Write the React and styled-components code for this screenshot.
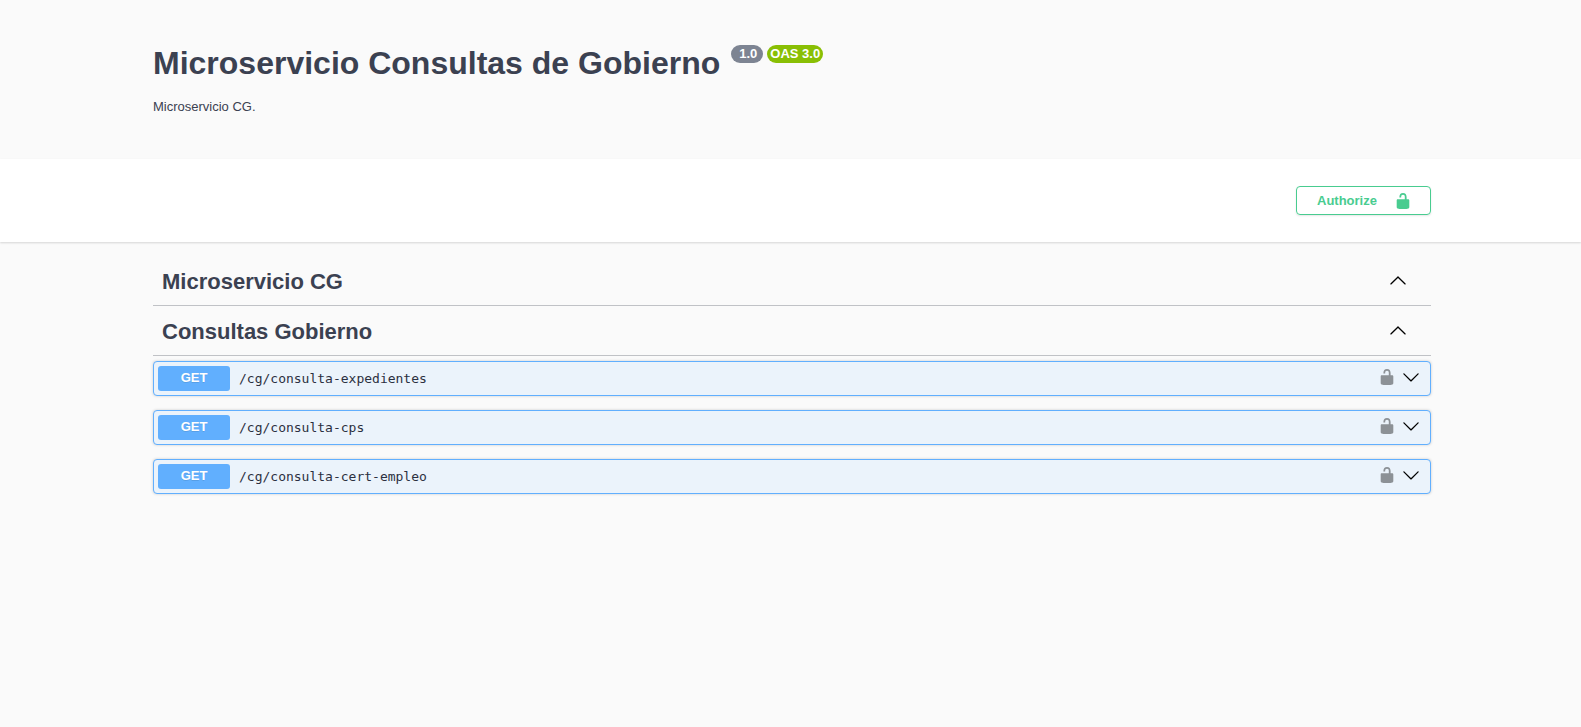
import React from "react";
import styled, { createGlobalStyle } from "styled-components";

const GlobalStyle = createGlobalStyle`
  * { box-sizing: border-box; }
  body {
    margin: 0;
    background: #fafafa;
    color: #3b4151;
    font-family: "Liberation Sans", Arial, sans-serif;
  }
  button { font-family: inherit; color: inherit; cursor: pointer; }
`;

const Wrapper = styled.div`
  padding: 0 150px 0 153px;
`;

const Info = styled.header`
  padding: 44px 0 43px;
`;

const TitleRow = styled.div`
  display: flex;
  align-items: flex-start;
  gap: 11px;
`;

const Title = styled.h1`
  margin: 0;
  font-size: 32px;
  line-height: 38px;
  font-weight: 700;
`;

const Badges = styled.div`
  display: flex;
  gap: 4px;
  padding-top: 1px;
`;

const Badge = styled.span`
  height: 18px;
  padding: ${(p) => (p.$wide ? "0 6px 0 8px" : "0 3px")};
  border-radius: 9px;
  background: ${(p) => p.$color};
  color: #fff;
  font-size: 13px;
  line-height: 17px;
  font-weight: 700;
`;

const Description = styled.p`
  margin: 16px 0 0;
  font-size: 13px;
  line-height: 18px;
`;

const SchemeBar = styled.section`
  background: #fff;
  padding: 27px 0;
  box-shadow: 0 1px 2px rgba(0, 0, 0, 0.15);
`;

const SchemeInner = styled(Wrapper)`
  display: flex;
  justify-content: flex-end;
`;

const AuthorizeButton = styled.button`
  display: flex;
  align-items: center;
  justify-content: space-between;
  width: 135px;
  height: 29px;
  padding: 0 18px 0 20px;
  border: 1px solid #49cc90;
  border-radius: 4px;
  background: transparent;
  box-shadow: 0 1px 2px rgba(0, 0, 0, 0.1);
  color: #49cc90;
  font-size: 13px;
  font-weight: 700;
`;

const Icon = styled.svg`
  display: block;
  flex: none;
  width: 18px;
  height: 18px;
  fill: currentColor;
`;

const Sections = styled.main`
  padding-top: 14px;
`;

const TagHeading = styled.h2`
  display: flex;
  align-items: flex-start;
  height: 50px;
  margin: 0;
  padding: 13px 24px 0 9px;
  border-bottom: 1px solid rgba(59, 65, 81, 0.3);
  font-size: 22px;
  line-height: 26px;
`;

const TagName = styled.span`
  flex: 1;
`;

const IconButton = styled.button`
  padding: ${(p) => (p.$tag ? "2px 0 0" : 0)};
  border: 0;
  background: none;
  color: #000;
  opacity: ${(p) => p.$opacity || 1};
`;

const Operations = styled.div`
  display: flex;
  flex-direction: column;
  gap: 14px;
  padding: 5px 0 40px;
`;

const Operation = styled.div`
  display: flex;
  align-items: center;
  padding: 4px 10px 4px 4px;
  border: 1px solid #61affe;
  border-radius: 4px;
  background: #ebf3fb;
  box-shadow: 0 0 3px rgba(0, 0, 0, 0.19);
`;

const OperationLink = styled.a`
  display: flex;
  flex: 1;
  align-items: center;
  gap: 9px;
  color: inherit;
  text-decoration: none;
`;

const Method = styled.span`
  width: 72px;
  height: 25px;
  border-radius: 3px;
  background: #61affe;
  color: #fff;
  font-size: 13px;
  line-height: 23px;
  font-weight: 700;
  text-align: center;
  text-shadow: 0 1px 0 rgba(0, 0, 0, 0.1);
`;

const Path = styled.span`
  font-family: "DejaVu Sans Mono", monospace;
  font-size: 13px;
  line-height: 25px;
  color: #2b3040;
`;

const Controls = styled.div`
  display: flex;
  gap: 6px;
  padding-bottom: 4px;
`;

const UnlockedIcon = () => (
  <Icon viewBox="0 0 20 20" aria-hidden="true">
    <path d="M15.8 8H14V5.6C14 2.703 12.665 1 10 1 7.334 1 6 2.703 6 5.6V6h2v-.801C8 3.754 8.797 3 10 3c1.203 0 2 .754 2 2.199V8H4c-.553 0-1 .646-1 1.199V17c0 .549.428 1.139.951 1.307l1.197.387C5.672 18.861 6.55 19 7.1 19h5.8c.549 0 1.428-.139 1.951-.307l1.196-.387c.524-.167.953-.757.953-1.306V9.199C17 8.646 16.352 8 15.8 8z" />
  </Icon>
);

const ArrowUp = () => (
  <Icon viewBox="0 0 20 20" aria-hidden="true">
    <path d="M17.418 14.908c.272.268.709.268.979 0s.271-.701 0-.969l-7.908-7.83c-.27-.268-.707-.268-.979 0l-7.908 7.83c-.27.268-.27.701 0 .969.271.268.709.268.979 0L10 7.767l7.418 7.141z" />
  </Icon>
);

const ArrowDown = () => (
  <Icon viewBox="0 0 20 20" aria-hidden="true">
    <path d="M17.418 6.109c.272-.268.709-.268.979 0s.271.701 0 .969l-7.908 7.83c-.27.268-.707.268-.979 0l-7.908-7.83c-.27-.268-.27-.701 0-.969.271-.268.709-.268.979 0L10 13.25l7.418-7.141z" />
  </Icon>
);

const tags = [
  { name: "Microservicio CG", paths: [] },
  {
    name: "Consultas Gobierno",
    paths: [
      "/cg/consulta-expedientes",
      "/cg/consulta-cps",
      "/cg/consulta-cert-empleo",
    ],
  },
];

export default function App() {
  return (
    <>
      <GlobalStyle />
      <Wrapper>
        <Info>
          <TitleRow>
            <Title>Microservicio Consultas de Gobierno</Title>
            <Badges>
              <Badge $color="#7d8492" $wide>1.0</Badge>
              <Badge $color="#89bf04">OAS 3.0</Badge>
            </Badges>
          </TitleRow>
          <Description>Microservicio CG.</Description>
        </Info>
      </Wrapper>
      <SchemeBar>
        <SchemeInner>
          <AuthorizeButton type="button">
            Authorize
            <UnlockedIcon />
          </AuthorizeButton>
        </SchemeInner>
      </SchemeBar>
      <Wrapper>
        <Sections>
          {tags.map((tag) => (
            <section key={tag.name}>
              <TagHeading>
                <TagName>{tag.name}</TagName>
                <IconButton type="button" $tag aria-label={`Collapse ${tag.name}`}>
                  <ArrowUp />
                </IconButton>
              </TagHeading>
              {tag.paths.length > 0 && (
                <Operations>
                  {tag.paths.map((path) => (
                    <Operation key={path}>
                      <OperationLink href={`#${path}`}>
                        <Method>GET</Method>
                        <Path>{path}</Path>
                      </OperationLink>
                      <Controls>
                        <IconButton type="button" $opacity={0.4} aria-label={`Authorize ${path}`}>
                          <UnlockedIcon />
                        </IconButton>
                        <IconButton type="button" aria-label={`Expand ${path}`}>
                          <ArrowDown />
                        </IconButton>
                      </Controls>
                    </Operation>
                  ))}
                </Operations>
              )}
            </section>
          ))}
        </Sections>
      </Wrapper>
    </>
  );
}
